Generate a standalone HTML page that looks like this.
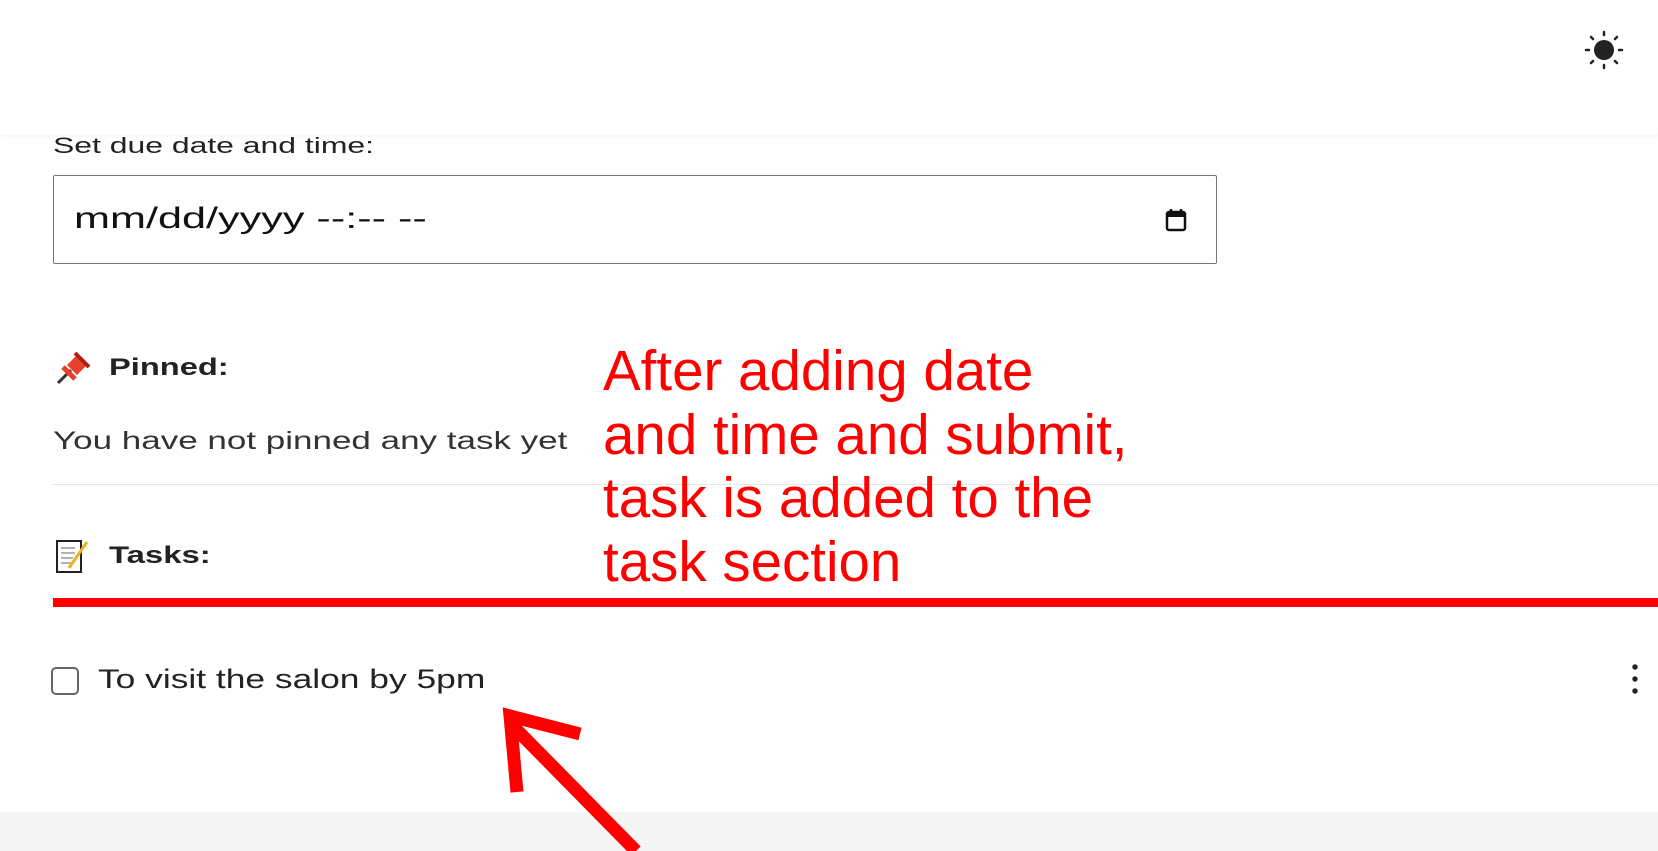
<!DOCTYPE html>
<html><head><meta charset="utf-8"><style>
*{margin:0;padding:0;box-sizing:border-box}
body{width:1658px;height:851px;overflow:hidden;background:#fff;font-family:"Liberation Sans",sans-serif;color:#222;position:relative}
.hdr{position:absolute;left:0;top:0;width:1658px;height:135px;background:#fff;box-shadow:0 1px 3px rgba(0,0,0,0.05)}
.abs{position:absolute;white-space:nowrap;transform-origin:0 50%}
.footer{position:absolute;left:0;top:812px;width:1658px;height:39px;background:#f5f5f5}
.note{position:absolute;left:603px;top:339px;color:#f00;font-size:56.5px;line-height:63.5px;font-family:"Liberation Sans",sans-serif}
</style></head><body>
<div class="hdr"></div>
<svg class="abs" style="left:1584px;top:30px" width="40" height="40" viewBox="0 0 40 40">
<circle cx="20" cy="20" r="10" fill="#222"/>
<g stroke="#222" stroke-width="2.5" stroke-linecap="round">
<line x1="20" y1="2" x2="20" y2="5"/><line x1="20" y1="35" x2="20" y2="38"/>
<line x1="2" y1="20" x2="5" y2="20"/><line x1="35" y1="20" x2="38" y2="20"/>
<line x1="7" y1="7" x2="9" y2="9"/><line x1="31" y1="31" x2="33" y2="33"/>
<line x1="7" y1="33" x2="9" y2="31"/><line x1="31" y1="9" x2="33" y2="7"/></g></svg>

<div class="abs" style="left:53px;top:133px;font-size:22px;color:#222;transform:scaleX(1.45)">Set due date and time:</div>
<div class="abs" style="left:53px;top:175px;width:1164px;height:89px;border:1px solid #777;border-radius:2px"></div>
<div class="abs" style="left:74px;top:202px;font-size:30px;color:#111;transform:scaleX(1.44)">mm/dd/yyyy --:-- --</div>
<svg class="abs" style="left:1164px;top:207px" width="24" height="26" viewBox="0 0 24 26">
<rect x="3" y="5" width="18" height="18" rx="2" fill="none" stroke="#111" stroke-width="2.5"/>
<rect x="3" y="5" width="18" height="5" fill="#111"/>
<line x1="7" y1="2" x2="7" y2="6" stroke="#111" stroke-width="2.5"/><line x1="17" y1="2" x2="17" y2="6" stroke="#111" stroke-width="2.5"/></svg>

<svg class="abs" style="left:55px;top:351px" width="36" height="34" viewBox="0 0 36 34">
<line x1="3" y1="32" x2="16" y2="19" stroke="#333" stroke-width="3"/>
<path d="M12 14 L22 4 L32 14 L22 24 Z" fill="#e8402a"/>
<path d="M20 2 L34 16" stroke="#b02010" stroke-width="4"/>
<path d="M8 16 L20 28" stroke="#e8402a" stroke-width="5"/></svg>
<div class="abs" style="left:109px;top:354px;font-size:24px;font-weight:bold;color:#222;transform:scaleX(1.36)">Pinned:</div>
<div class="abs" style="left:53px;top:427px;font-size:25px;color:#333;transform:scaleX(1.40)">You have not pinned any task yet</div>
<div class="abs" style="left:53px;top:484px;width:1605px;height:1px;background:#e6e6e6"></div>

<svg class="abs" style="left:55px;top:538px" width="36" height="36" viewBox="0 0 36 36">
<rect x="2" y="3" width="24" height="31" fill="#fff" stroke="#222" stroke-width="2"/>
<g stroke="#999" stroke-width="1.5"><line x1="6" y1="10" x2="20" y2="10"/><line x1="6" y1="15" x2="20" y2="15"/><line x1="6" y1="20" x2="18" y2="20"/><line x1="6" y1="25" x2="16" y2="25"/></g>
<line x1="14" y1="30" x2="32" y2="4" stroke="#f0b020" stroke-width="3"/></svg>
<div class="abs" style="left:109px;top:542px;font-size:24px;font-weight:bold;color:#222;transform:scaleX(1.37)">Tasks:</div>
<div class="abs" style="left:53px;top:598px;width:1605px;height:9px;background:#f00"></div>

<div class="abs" style="left:51px;top:667px;width:28px;height:28px;border:2px solid #666;border-radius:5px;background:#fff"></div>
<div class="abs" style="left:98px;top:664px;font-size:27px;color:#222;transform:scaleX(1.31)">To visit the salon by 5pm</div>
<svg class="abs" style="left:1628px;top:663px" width="14" height="34" viewBox="0 0 14 34">
<circle cx="7" cy="4" r="2.7" fill="#222"/><circle cx="7" cy="16" r="2.7" fill="#222"/><circle cx="7" cy="28" r="2.7" fill="#222"/></svg>

<div class="footer"></div>
<div class="note">After adding date<br>and time and submit,<br>task is added to the<br>task section</div>
<svg class="abs" style="left:0;top:0" width="1658" height="851" viewBox="0 0 1658 851">
<g stroke="#f00" stroke-width="13" fill="none" stroke-linejoin="miter" stroke-linecap="butt">
<line x1="512" y1="725" x2="636" y2="851"/>
<polyline points="517,792 510,716 580,734"/></g></svg>
</body></html>
